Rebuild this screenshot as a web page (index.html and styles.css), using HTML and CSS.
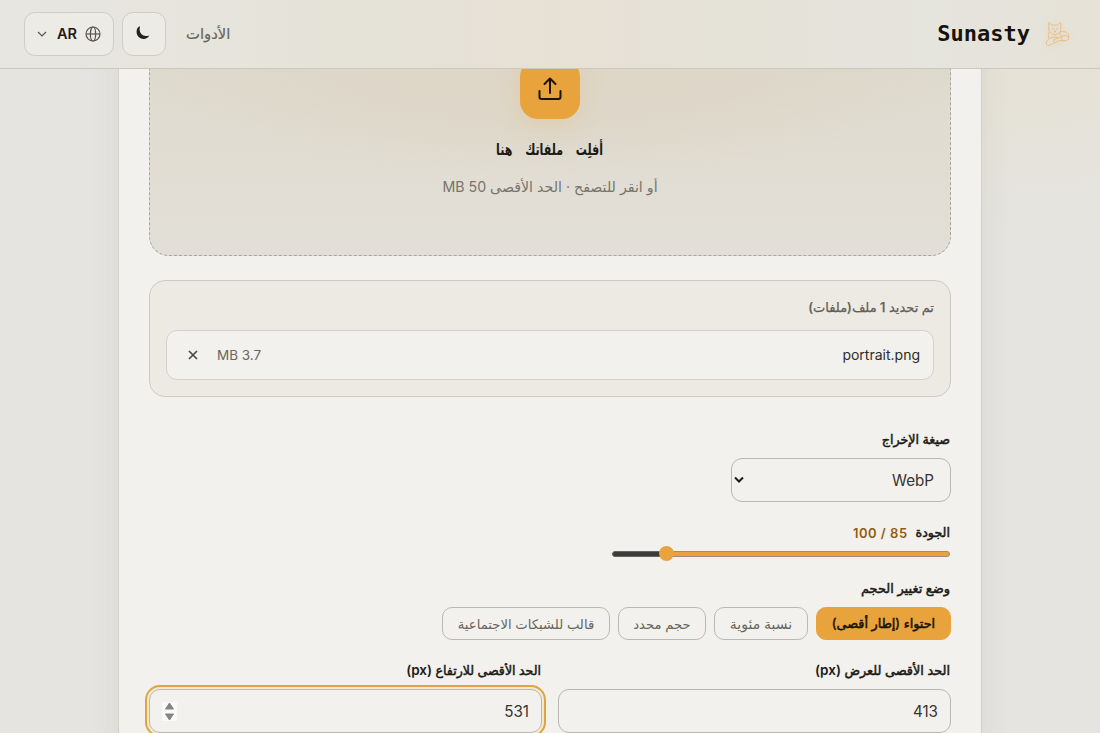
FILE: index.html
```html
<!DOCTYPE html>
<html lang="ar" dir="rtl">
<head>
<meta charset="utf-8">
<title>Sunasty</title>
<link rel="stylesheet" href="styles.css">
</head>
<body>
<header class="header">
  <a class="brand">
    <svg class="cat" viewBox="0 0 26 27" fill="none" stroke="#ebb975" stroke-width=".9" stroke-linejoin="round" stroke-linecap="round"><path d="M4 9V2l3.500 2.700h5.500L16.500 2v7c0 3-2.500 5-6 6C6.500 14 4 12 4 9zM7.500 8.500l1.500.5M13 8.500l-1.500.5M10 11h1l-.5 1zM4.500 12c-1.500 2-1.500 4.500 0 6.500L1.500 22c-.5 2 .5 4 2.500 4l6.500-3 3.500-2h8c2.500-.5 3-3 2.500-5.500-.5-3-3.500-4.500-7.500-4M4.500 18.500l5-1.500 5 1M10 23l-1-3 7-3M16 11.500c-1 2-.5 4 1.500 5.500M24 17c-2-2-5-2-6.500 0-.8 1.300-.3 3 1 4"/></svg>
    <span class="brand-name">Sunasty</span>
  </a>
  <nav class="nav">
    <a class="nav-link"><span class="t">الأدوات</span></a>
    <button class="icon-button"><svg class="moon" width="16" height="16" viewBox="0 0 16 16"><path d="M4 1.500C.8 4 .8 9.500 4 12.200c3.400 2.800 8.500 2 10.300-1.700-4 1.300-7.300.2-8.700-2.500C4.500 5.900 4.400 3.600 5 1.500z" fill="#24211c"/></svg></button>
    <button class="language"><svg width="16" height="16" viewBox="0 0 16 16" fill="none" stroke="#5b564d" stroke-width="1.2"><circle cx="8" cy="8" r="7"/><ellipse cx="8" cy="8" rx="2.600" ry="7"/><path d="M1 8h14"/></svg><b>AR</b><svg class="chevron" width="10" height="6" viewBox="0 0 10 6" fill="none" stroke="#5b564d" stroke-width="1.2"><path d="M1 1l4 4 4-4"/></svg></button>
  </nav>
</header>
<main class="card">
  <section class="dropzone">
    <div class="upload"><svg width="26" height="26" viewBox="0 0 26 26" fill="none" stroke="#1d1307" stroke-width="2" stroke-linecap="round" stroke-linejoin="round"><path d="M13 17V3M7.500 8L13 2.500 18.500 8M2.500 15v6a2 2 0 0 0 2 2h17a2 2 0 0 0 2-2v-6"/></svg></div>
    <h2 class="drop-title"><span class="t">أفلِت ملفاتك هنا</span></h2>
    <p class="drop-hint"><span class="t">أو انقر للتصفح · الحد الأقصى 50 MB</span></p>
  </section>
  <section class="files">
    <p class="files-count"><span class="t">تم تحديد 1 ملف(ملفات)</span></p>
    <div class="file"><span class="file-name">portrait.png</span><span class="file-size">3.7 MB</span><svg class="remove" width="10" height="10" viewBox="0 0 10 10" stroke="#4d4942" stroke-width="1.700"><path d="M1 1l8 8M9 1L1 9"/></svg></div>
  </section>
  <section class="settings">
    <div class="label format-label"><span class="t">صيغة الإخراج</span></div>
    <div class="select"><span>WebP</span><svg width="10" height="8" viewBox="0 0 10 8" fill="none" stroke="#1d1b18" stroke-width="2"><path d="M1 1.500l4 4 4-4"/></svg></div>
    <div class="label quality-label"><span class="t">الجودة</span><span class="quality-value">85 / 100</span></div>
    <div class="slider"><div class="slider-fill"></div><div class="slider-rest"></div><i class="thumb"></i></div>
    <div class="label mode-label"><span class="t">وضع تغيير الحجم</span></div>
    <div class="modes">
      <button class="mode mode-fit"><span class="t">احتواء (إطار أقصى)</span></button>
      <button class="mode mode-percent"><span class="t">نسبة مئوية</span></button>
      <button class="mode mode-exact"><span class="t">حجم محدد</span></button>
      <button class="mode mode-social"><span class="t">قالب للشبكات الاجتماعية</span></button>
    </div>
    <div class="fields">
      <div><div class="label width-label"><span class="t">الحد الأقصى للعرض <span class="unit">(px)</span></span></div><div class="input"><span>413</span></div></div>
      <div><div class="label height-label"><span class="t">الحد الأقصى للارتفاع <span class="unit">(px)</span></span></div><div class="input focused"><span>531</span><svg width="15" height="19" viewBox="0 0 15 19"><path fill="#fafaf9" d="M0 0h15v19H0z"/><path d="M7.500 1l4 6h-8zM7.500 18l4-6h-8z" fill="#858585" stroke="#858585" stroke-linejoin="round"/></svg></div></div>
    </div>
  </section>
</main>
</body>
</html>
```
FILE: styles.css
```css
* { box-sizing: border-box; }
body {
  margin: 0;
  height: 733px;
  overflow: hidden;
  color: #1c1a16;
  font: 14px/20px Inter, "DejaVu Sans", sans-serif;
  background: radial-gradient(ellipse 480px 240px at 1000px 0, #e6e1d2, transparent), #e5e4e0;
}
h2, p { margin: 0; }
button { font: inherit; padding: 0; }
.t { display: inline-block; white-space: nowrap; }
.header {
  position: fixed;
  inset: 0 0 auto;
  z-index: 2;
  height: 69px;
  padding: 0 24px 1px;
  display: flex;
  justify-content: space-between;
  align-items: center;
  border-bottom: 1px solid #cac8c1;
  background: linear-gradient(90deg, #e7e6e1, #e5e2d7 35%, #e7e0d5 50%, #e5e2d7 65%, #e5e4dd 85%, #e6e2d7);
}
.brand { display: flex; align-items: center; gap: 15px; padding-right: 6px; }
.cat { width: 25px; height: 27px; filter: drop-shadow(0 1px 3px #d9b98d66); }
.brand-name { font: bold 22px/30px "DejaVu Sans Mono", monospace; color: #15130d; }
.nav { display: flex; align-items: center; }
.nav-link { margin-left: 20px; color: #69645b; font-size: 14.8px; -webkit-text-stroke: .2px; }
.icon-button, .language {
  height: 44px;
  border: 1px solid #cecdc8;
  border-radius: 11px;
  background: #edebe6;
  display: flex;
  align-items: center;
  justify-content: center;
}
.icon-button { width: 44px; margin-left: 8px; }
.moon { margin: 0 2px 1px 0; }
.language { width: 90px; gap: 8px; }
.language b { font-weight: 600; font-size: 14.5px; color: #1c1a16; }
.chevron { margin-right: 2px; }
.card {
  width: 864px;
  height: 760px;
  margin: 0 auto;
  padding: 0 30px;
  background: #f2f1ed;
  border: solid #d1d0cb;
  border-width: 0 1px;
  box-shadow: 0 0 28px #8f8b8120;
}
.dropzone {
  height: 256px;
  padding-top: 59px;
  border: 1px dashed #aaa69a;
  border-top: 0;
  border-radius: 0 0 20px 20px;
  background: radial-gradient(ellipse 430px 125px at 50% 52px, #ded5c6 0, #ded7c9 55%, transparent), linear-gradient(#dddacd 20%, #e1ddd3 65%, #e2dfd8);
  display: flex;
  flex-direction: column;
  align-items: center;
}
.upload {
  flex: none;
  width: 60px;
  height: 60px;
  border-radius: 18px;
  background: #e8a33d;
  box-shadow: 0 6px 24px #e8a33d30;
  display: flex;
  align-items: center;
  justify-content: center;
}
.drop-title { margin-top: 18px; font: bold 16px/26px "DejaVu Sans", sans-serif; word-spacing: 13px; }
.drop-title .t { transform: scaleX(.69); }
.drop-hint { margin-top: 12px; color: #77736b; font-size: 14.2px; line-height: 24px; }
.files {
  height: 117px;
  margin-top: 24px;
  padding: 16px;
  border: 1px solid #cdcbc5;
  border-radius: 16px;
  background: #eceae3;
}
.files-count { height: 20px; font-size: 13px; font-weight: 500; color: #625e56; -webkit-text-stroke: .25px; }
.file {
  height: 50px;
  margin-top: 13px;
  padding: 0 13px 0 21px;
  display: flex;
  align-items: center;
  border: 1px solid #d2d1cb;
  border-radius: 11px;
  background: #f2f1ed;
  color: #2d2b26;
}
.file-name { margin-left: auto; }
.file-size { color: #6a665e; font-size: 13.5px; }
.remove { margin-right: 19px; }
.label { height: 20px; font-size: 12.7px; font-weight: 500; color: #1c1a16; -webkit-text-stroke: .5px; }
.label .t { margin-right: 1px; }
.unit { font-weight: 600; font-size: 13.5px; -webkit-text-stroke: 0; }
.format-label { margin-top: 33px; }
.select {
  width: 220px;
  height: 44px;
  margin-top: 8px;
  padding: 0 16px 0 2px;
  display: flex;
  align-items: center;
  justify-content: space-between;
  border: 1px solid #b9b7b2;
  border-radius: 11px;
  color: #37342e;
  font-size: 15.2px;
}
.select span, .input span { padding-top: 2px; }
.quality-label { margin-top: 21px; display: flex; gap: 8px; }
.quality-value { color: #935c11; font-size: 13px; font-weight: 600; letter-spacing: .5px; -webkit-text-stroke: 0; }
.slider { width: 338px; height: 16px; margin-top: 3px; margin-right: 1px; display: flex; align-items: center; position: relative; }
.slider-fill { width: 283px; height: 6px; border: 1px solid #9b8d78; border-radius: 0 4px 4px 0; background: #e8a33d; }
.slider-rest { flex: 1; height: 6px; border: 1px solid #65635f; border-radius: 4px 0 0 4px; background: #3b3b3b; }
.thumb { position: absolute; left: 47px; top: 0; width: 15px; height: 15px; border-radius: 50%; background: #e8a33d; }
.mode-label { margin-top: 16px; font-size: 13px; }
.modes { display: flex; gap: 8px; margin-top: 9px; }
.mode {
  height: 33px;
  display: flex;
  align-items: center;
  justify-content: center;
  border: 1px solid #bbb9b4;
  border-radius: 10px;
  background: transparent;
  color: #69655d;
  font-size: 13.2px;
}
.mode-fit { width: 135px; color: #181209; background: #e8a33d; border-color: #e8a33d; font-size: 12.8px; -webkit-text-stroke: .5px; }
.mode-percent { width: 94px; font-size: 14px; }
.mode-exact { width: 88px; }
.mode-social { width: 168px; }
.fields { display: grid; grid-template-columns: 393px 393px; justify-content: space-between; margin-top: 21px; }
.width-label { font-size: 12.9px; }
.height-label { font-size: 12.6px; }
.width-label .t, .height-label .t { line-height: 18px; }
.input {
  height: 44px;
  margin-top: 8px;
  padding: 0 12px 0 20px;
  display: flex;
  align-items: center;
  justify-content: space-between;
  border: 1px solid #b9b7b2;
  border-radius: 11px;
  color: #37342e;
  font-size: 15.2px;
}
.focused { padding-left: 12px; outline: 2px solid #dda442; outline-offset: 2px; box-shadow: 0 0 0 2px #f5e9cd; }
```
